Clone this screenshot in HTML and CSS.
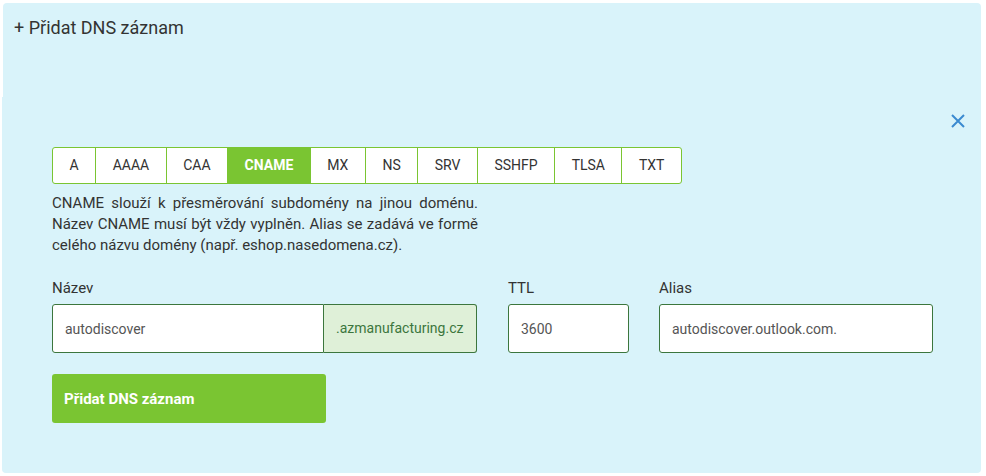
FILE: index.html
```html
<!DOCTYPE html>
<html lang="cs">
<head>
    <meta charset="UTF-8">
    <meta name="viewport" content="width=device-width, initial-scale=1.0">
    <title>Přidat DNS záznam</title>
    <link rel="stylesheet" href="styles.css">
</head>
<body>
  <!-- sbalovaci hlavicka -->
  <div class="add-head">
    <span class="add-title">+ Přidat DNS záznam</span>
  </div>

  <div class="add-body">
    <a href="#" class="close" title="Zavřít">
      <svg width="14" height="14" viewBox="0 0 14 14">
        <path d="M1 1 L13 13 M13 1 L1 13" stroke="#3b8ad0" stroke-width="2" fill="none"/>
      </svg>
    </a>

    <ul class="types">
      <li>A</li>
      <li>AAAA</li>
      <li>CAA</li>
      <li class="active">CNAME</li>
      <li>MX</li>
      <li>NS</li>
      <li>SRV</li>
      <li>SSHFP</li>
      <li>TLSA</li>
      <li>TXT</li>
    </ul>

    <p class="help">CNAME slouží k přesměrování subdomény na jinou doménu. Název CNAME musí být vždy vyplněn. Alias se zadává ve formě celého názvu domény (např. eshop.nasedomena.cz).</p>

    <div class="fields">
      <div class="field f-name">
        <label for="name">Název</label>
        <div class="group">
          <input type="text" id="name" value="autodiscover">
          <span class="suffix">.azmanufacturing.cz</span>
        </div>
      </div>
      <div class="field f-ttl">
        <label for="ttl">TTL</label>
        <input type="text" id="ttl" value="3600">
      </div>
      <div class="field f-alias">
        <label for="alias">Alias</label>
        <input type="text" id="alias" value="autodiscover.outlook.com.">
      </div>
    </div>

    <button class="btn-add">Přidat DNS záznam</button>
  </div>
</body>
</html>
```

FILE: styles.css
```css
body {
  margin: 0;
  font-family: Roboto, "Liberation Sans", Arial, sans-serif;
  background-color: #ffffff;
  color: #333;
}

.add-head {
  margin: 3px 5px 0 3px;
  height: 94px;
  box-sizing: border-box;
  padding: 13px 11px 0;
  background-color: #d9f3fa;
  border-radius: 4px 4px 0 0;
}

.add-title {
  font-size: 18px;
  line-height: 24px;
  color: #333;
}

.add-body {
  position: relative;
  margin-left: 2px;
  width: 979px;
  height: 376px;
  box-sizing: border-box;
  padding: 50px 0 0 50px;
  background-color: #d9f3fa;
  border-radius: 0 0 4px 4px;
}

.close {
  position: absolute;
  top: 17px;
  right: 16px;
  width: 14px;
  height: 14px;
  display: block;
}

.close svg {
  display: block;
}

/* typy zaznamu */
.types {
  list-style: none;
  margin: 0;
  padding: 0;
  display: flex;
  width: fit-content;
  border: 1px solid #7ac532;
  border-radius: 3px;
  background: #fff;
  overflow: hidden;
}

.types li {
  padding: 0 16.5px;
  font-size: 14px;
  line-height: 35px;
  color: #333;
  border-left: 1px solid #7ac532;
  cursor: pointer;
}

.types li:first-child {
  border-left: none;
}

.types li.active {
  background-color: #7ac532;
  color: #fff;
  font-weight: bold;
}

.help {
  margin: 9px 0 0;
  width: 426px;
  font-size: 15px;
  line-height: 21px;
  text-align: justify;
  color: #333;
}

.fields {
  display: flex;
  margin-top: 22px;
}

.field label {
  display: block;
  font-size: 15px;
  line-height: 20px;
  margin-bottom: 6px;
  color: #333;
}

.field input {
  display: block;
  box-sizing: border-box;
  height: 49px;
  padding: 0 12px;
  border: 1px solid #3c763d;
  border-radius: 3px;
  background: #fff;
  font-family: inherit;
  font-size: 14px;
  color: #555;
  outline: none;
}

.f-name {
  width: 425px;
}

.group {
  display: flex;
}

.group input {
  width: 272px;
  border-radius: 3px 0 0 3px;
}

.suffix {
  box-sizing: border-box;
  width: 153px;
  height: 49px;
  line-height: 47px;
  padding: 0 12px;
  border: 1px solid #3c763d;
  border-left: none;
  border-radius: 0 3px 3px 0;
  background-color: #dff0d8;
  color: #3c763d;
  font-size: 14px;
  white-space: nowrap;
}

.f-ttl {
  margin-left: 31px;
}

.f-ttl input {
  width: 121px;
}

.f-alias {
  margin-left: 30px;
}

.f-alias input {
  width: 274px;
}

.btn-add {
  display: block;
  margin-top: 21px;
  width: 274px;
  height: 49px;
  padding: 0 12px;
  text-align: left;
  border: none;
  border-radius: 3px;
  background-color: #7ac532;
  color: #fff;
  font-family: inherit;
  font-size: 15px;
  font-weight: bold;
  cursor: pointer;
}

.btn-add:hover {
  background-color: #6db52a;
}
```
